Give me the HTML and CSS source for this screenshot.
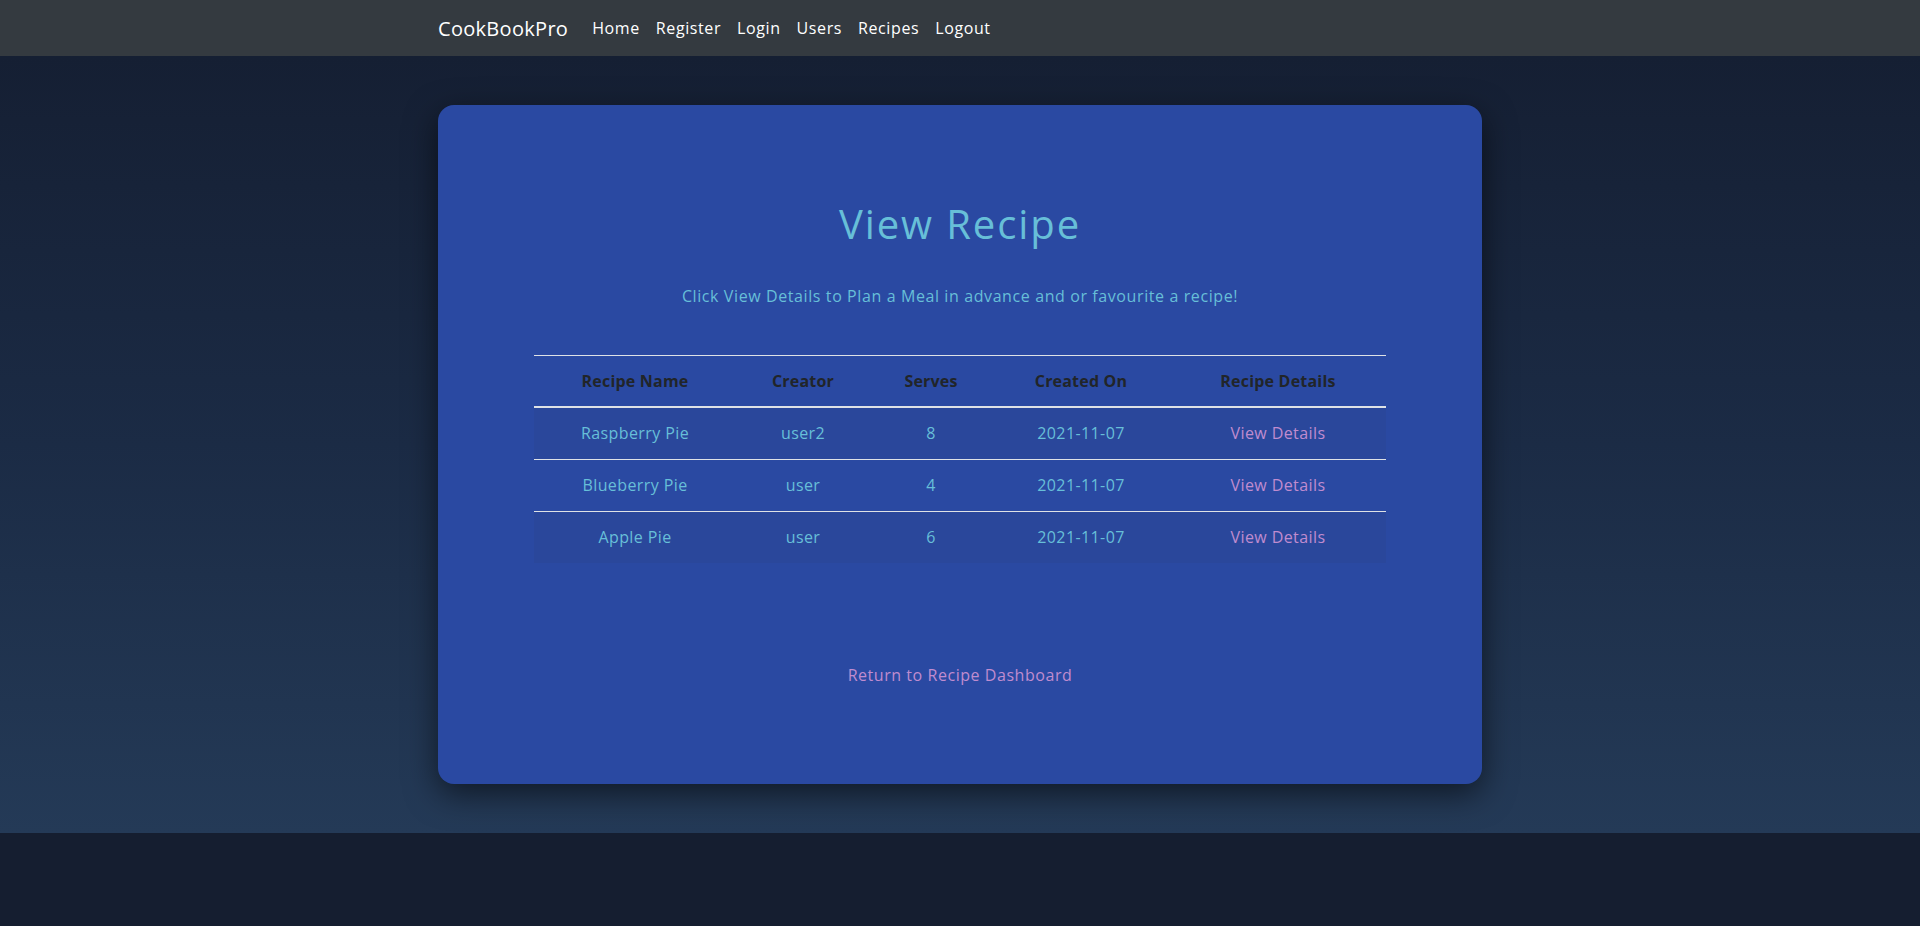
FILE: index.html
```html
<!DOCTYPE html>
<html lang="en">
<head>
<meta charset="utf-8">
<title>CookBookPro - View Recipe</title>
<link rel="stylesheet" href="styles.css">
</head>
<body>
<nav class="navbar">
  <div class="nav-inner">
    <a class="brand" href="#">CookBookPro</a>
    <ul class="nav-links">
      <li><a href="#">Home</a></li>
      <li><a href="#">Register</a></li>
      <li><a href="#">Login</a></li>
      <li><a href="#">Users</a></li>
      <li><a href="#">Recipes</a></li>
      <li><a href="#">Logout</a></li>
    </ul>
  </div>
</nav>
<main class="main">
  <section class="card">
    <h1 class="title">View Recipe</h1>
    <p class="subtitle">Click View Details to Plan a Meal in advance and or favourite a recipe!</p>
    <table class="recipes">
      <colgroup>
        <col class="c1"><col class="c2"><col class="c3"><col class="c4"><col class="c5">
      </colgroup>
      <thead>
        <tr><th>Recipe Name</th><th>Creator</th><th>Serves</th><th>Created On</th><th>Recipe Details</th></tr>
      </thead>
      <tbody>
        <tr class="odd"><td>Raspberry Pie</td><td>user2</td><td>8</td><td>2021-11-07</td><td><a href="#">View Details</a></td></tr>
        <tr><td>Blueberry Pie</td><td>user</td><td>4</td><td>2021-11-07</td><td><a href="#">View Details</a></td></tr>
        <tr class="odd last"><td>Apple Pie</td><td>user</td><td>6</td><td>2021-11-07</td><td><a href="#">View Details</a></td></tr>
      </tbody>
    </table>
    <a class="return" href="#">Return to Recipe Dashboard</a>
  </section>
</main>
<footer class="footer"></footer>
</body>
</html>
```
FILE: styles.css
```css
* { box-sizing: border-box; }
html, body { margin: 0; padding: 0; }
body {
  font-family: "Open Sans", "DejaVu Sans", sans-serif;
  background: #151e30;
  color: #fff;
  min-height: 926px;
}
a { text-decoration: none; }

.navbar {
  height: 56px;
  background: #343a40;
  display: flex;
  align-items: center;
}
.nav-inner {
  width: 1044px;
  margin: 0 auto;
  display: flex;
  align-items: center;
}
.brand {
  color: #fff;
  font-size: 20px;
  letter-spacing: 0.3px;
  margin-right: 16px;
}
.nav-links {
  list-style: none;
  margin: 0;
  padding: 0;
  display: flex;
}
.nav-links a {
  display: block;
  color: #fff;
  font-size: 16px;
  font-weight: 500;
  padding: 8px;
  letter-spacing: 0.6px;
}

.main {
  height: 777px;
  padding: 49px 0;
  background: linear-gradient(to bottom, #151f33 0%, #1b2b45 50%, #243a57 100%);
}
.card {
  width: 1044px;
  height: 679px;
  margin: 0 auto;
  background: #2a49a2;
  border-radius: 16px;
  box-shadow: 0 10px 32px rgba(0, 0, 0, 0.55);
  padding-top: 95px;
  display: flex;
  flex-direction: column;
  align-items: center;
}
.title {
  margin: 0;
  font-size: 40px;
  line-height: 48px;
  font-weight: 500;
  letter-spacing: 1.9px;
  color: #67bfd8;
}
.subtitle {
  margin: 36px 0 0;
  font-size: 16px;
  line-height: 24px;
  letter-spacing: 0.6px;
  color: #67bfd8;
}
.recipes {
  margin-top: 47px;
  width: 852px;
  border-collapse: collapse;
  table-layout: fixed;
  font-size: 16px;
  letter-spacing: 0.4px;
}
.c1 { width: 202px; }
.c2 { width: 134px; }
.c3 { width: 122px; }
.c4 { width: 178px; }
.c5 { width: 216px; }
.recipes th {
  color: #212529;
  font-weight: 700;
  font-size: 16px;
  letter-spacing: 0.2px;
  line-height: 24px;
  padding: 13px 0 13px;
  text-align: center;
  border-top: 1px solid #dee2e6;
  border-bottom: 2px solid #dee2e6;
}
.recipes td {
  color: #67bfd8;
  line-height: 24px;
  padding: 13px 0 14px;
  text-align: center;
  border-bottom: 1px solid #dee2e6;
}
.recipes tr.odd td { background: #2a479b; }
.recipes tr.last td { border-bottom: none; }
.recipes td a { color: #c08ccf; }

.return {
  margin-top: 100px;
  font-size: 16px;
  line-height: 24px;
  letter-spacing: 0.55px;
  color: #c08ccf;
}
.footer {
  height: 93px;
  background: #151e30;
}
```
